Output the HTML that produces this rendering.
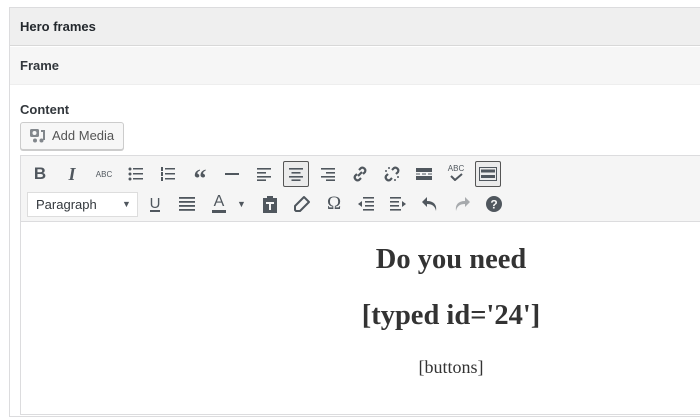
<!DOCTYPE html>
<html><head><style>
*{margin:0;padding:0;box-sizing:border-box}
body{width:700px;height:400px;overflow:hidden;background:#fff;font-family:"Liberation Sans",sans-serif;position:relative;color:#23282d}
.a{position:absolute}
.ic{position:absolute;width:24px;height:24px;display:flex;align-items:center;justify-content:center;color:#50575e}
.ic svg{display:block}
</style></head><body>
<div class="a" style="left:9px;top:7px;width:700px;height:410px;border:1px solid #dcdcde;border-right:none;background:#fff"></div>
<div class="a" style="left:10px;top:8px;width:690px;height:38px;background:#efefef;border-bottom:1px solid #d8d8d8"></div>
<div class="a" style="left:20px;top:19px;font-size:13px;font-weight:bold">Hero frames</div>
<div class="a" style="left:10px;top:47px;width:690px;height:38px;background:#f6f6f6;border-bottom:1px solid #eee"></div>
<div class="a" style="left:20px;top:58px;font-size:13px;font-weight:bold;color:#32373c">Frame</div>
<div class="a" style="left:20px;top:102px;font-size:13px;font-weight:bold;color:#32373c">Content</div>
<div class="a" style="left:20px;top:122px;width:104px;height:28px;border:1px solid #ccc;border-radius:3px;background:#f7f7f7;box-shadow:0 1px 0 #ccc"></div>
<svg class="a" style="left:29px;top:128px" width="18" height="16" viewBox="0 0 18 16"><rect x="1" y="1" width="9" height="8" rx="1.5" fill="#82878c"/><circle cx="5.5" cy="5" r="2" fill="#f7f7f7"/><path d="M12 3h3v9" stroke="#82878c" stroke-width="2" fill="none"/><circle cx="12.5" cy="12.5" r="2" fill="#82878c"/><circle cx="6" cy="12.5" r="2" fill="#82878c"/></svg>
<div class="a" style="left:52px;top:128px;font-size:13px;color:#555">Add Media</div>
<div class="a" style="left:20px;top:155px;width:690px;height:260px;border:1px solid #dcdcde;border-right:none"></div>
<div class="a" style="left:21px;top:156px;width:690px;height:66px;background:#f5f5f5;border-bottom:1px solid #dcdcde"></div>
<!-- row1 -->
<div class="ic" style="left:28px;top:162px;font-weight:bold;font-size:17px">B</div>
<div class="ic" style="left:60px;top:162px;font-style:italic;font-size:18px;font-family:'Liberation Serif',serif;font-weight:bold">I</div>
<div class="ic" style="left:92px;top:162px;font-size:8px">ABC</div>
<div class="ic" style="left:124px;top:162px"><svg width="16" height="14"><g fill="#50575e"><circle cx="2" cy="2" r="1.5"/><circle cx="2" cy="7" r="1.5"/><circle cx="2" cy="12" r="1.5"/><rect x="5" y="1" width="10" height="1.5"/><rect x="5" y="6" width="10" height="1.5"/><rect x="5" y="11" width="10" height="1.5"/></g></svg></div>
<div class="ic" style="left:156px;top:162px"><svg width="16" height="14"><g fill="#50575e"><rect x="1" y="0" width="2" height="4"/><rect x="1" y="5" width="2" height="4"/><rect x="1" y="10" width="2" height="4"/><rect x="5" y="1" width="10" height="1.5"/><rect x="5" y="6" width="10" height="1.5"/><rect x="5" y="11" width="10" height="1.5"/></g></svg></div>
<div class="ic" style="left:188px;top:162px;font-weight:bold;font-size:26px;font-family:'Liberation Serif',serif;padding-top:10px">“</div>
<div class="ic" style="left:220px;top:162px"><svg width="14" height="3"><rect width="14" height="2" fill="#50575e"/></svg></div>
<div class="ic" style="left:252px;top:162px"><svg width="14" height="13"><g fill="#50575e"><rect y="0" width="14" height="1.6"/><rect y="4" width="9" height="1.6"/><rect y="8" width="14" height="1.6"/><rect y="11.4" width="9" height="1.6"/></g></svg></div>
<div class="ic" style="left:283px;top:161px;width:26px;height:26px;border:1px solid #555;border-radius:2px;background:#ebebeb"><svg width="14" height="13"><g fill="#50575e"><rect y="0" width="14" height="1.6"/><rect x="2.5" y="4" width="9" height="1.6"/><rect y="8" width="14" height="1.6"/><rect x="2.5" y="11.4" width="9" height="1.6"/></g></svg></div>
<div class="ic" style="left:316px;top:162px"><svg width="14" height="13"><g fill="#50575e"><rect y="0" width="14" height="1.6"/><rect x="5" y="4" width="9" height="1.6"/><rect y="8" width="14" height="1.6"/><rect x="5" y="11.4" width="9" height="1.6"/></g></svg></div>
<div class="ic" style="left:348px;top:162px"><svg width="18" height="18"><g stroke="#50575e" stroke-width="2.2" fill="none"><path d="M8 5l2-2a3 3 0 014 4l-2 2"/><path d="M10 13l-2 2a3 3 0 01-4-4l2-2"/><path d="M7 11l4-4"/></g></svg></div>
<div class="ic" style="left:380px;top:162px"><svg width="18" height="18"><g stroke="#50575e" stroke-width="2.2" fill="none"><path d="M9 5l2-2a3 3 0 014 4l-2 2"/><path d="M9 13l-2 2a3 3 0 01-4-4l2-2"/><path d="M2 6h2M6 2v2M16 12h-2M12 16v-2" stroke-width="1.5"/></g></svg></div>
<div class="ic" style="left:412px;top:162px"><svg width="16" height="12"><g fill="#50575e"><rect width="16" height="4"/><rect y="5.5" width="4" height="1"/><rect x="6" y="5.5" width="4" height="1"/><rect x="12" y="5.5" width="4" height="1"/><rect y="8" width="16" height="4"/></g></svg></div>
<div class="ic" style="left:444px;top:160px;flex-direction:column;font-size:8px;line-height:9px">ABC<svg width="14" height="8"><path d="M2 3l4 4 7-6" stroke="#50575e" stroke-width="2" fill="none"/></svg></div>
<div class="ic" style="left:475px;top:161px;width:26px;height:26px;border:1px solid #555;border-radius:2px;background:#ebebeb"><svg width="18" height="14"><rect x=".5" y=".5" width="17" height="13" fill="none" stroke="#50575e"/><g fill="#50575e"><rect x="2" y="2.5" width="14" height="3"/><rect x="2" y="8" width="14" height="3"/></g></svg></div>
<!-- row2 -->
<div class="a" style="left:27px;top:192px;width:111px;height:25px;background:#fff;border:1px solid #ddd"></div>
<div class="a" style="left:36px;top:197px;font-size:13px;color:#32373c">Paragraph</div>
<div class="a" style="left:122px;top:197px;font-size:9px;color:#50575e;padding-top:2px">▼</div>
<div class="ic" style="left:143px;top:192px;font-size:15px"><span style="border-bottom:2px solid #50575e;line-height:13px">U</span></div>
<div class="ic" style="left:175px;top:192px"><svg width="16" height="14"><g fill="#50575e"><rect y="0" width="16" height="1.8"/><rect y="4" width="16" height="1.8"/><rect y="8" width="16" height="1.8"/><rect y="12" width="16" height="1.8"/></g></svg></div>
<div class="ic" style="left:207px;top:191px;font-size:16px"><span style="border-bottom:3px solid #50575e;line-height:16px;padding:0 2px">A</span></div>
<div class="a" style="left:237px;top:199px;font-size:9px;color:#50575e">▼</div>
<div class="ic" style="left:258px;top:192px"><svg width="16" height="18"><path d="M1 3h4V1h6v2h4v15H1z" fill="#50575e"/><rect x="4" y="7" width="8" height="2" fill="#f5f5f5"/><rect x="7" y="7" width="2" height="8" fill="#f5f5f5"/></svg></div>
<div class="ic" style="left:290px;top:192px"><svg width="18" height="18"><path d="M11 2l5 5-9 9H3l-1-1v-4z" fill="none" stroke="#50575e" stroke-width="2" stroke-linejoin="round"/></svg></div>
<div class="ic" style="left:322px;top:192px;font-size:19px;font-family:'Liberation Serif',serif">Ω</div>
<div class="ic" style="left:354px;top:192px"><svg width="16" height="14"><g fill="#50575e"><rect x="5" y="0" width="11" height="1.6"/><rect x="7" y="4" width="9" height="1.6"/><rect x="7" y="8" width="9" height="1.6"/><rect x="5" y="12" width="11" height="1.6"/><path d="M0 7l4-3v6z"/></g></svg></div>
<div class="ic" style="left:386px;top:192px"><svg width="16" height="14"><g fill="#50575e"><rect x="0" y="0" width="11" height="1.6"/><rect x="0" y="4" width="9" height="1.6"/><rect x="0" y="8" width="9" height="1.6"/><rect x="0" y="12" width="11" height="1.6"/><path d="M16 7l-4-3v6z"/></g></svg></div>
<div class="ic" style="left:418px;top:192px"><svg width="18" height="18"><path d="M6 2L1 7l5 5V9c5 0 8 2 9 7 1-6-2-10-9-10z" fill="#50575e"/></svg></div>
<div class="ic" style="left:450px;top:192px"><svg width="18" height="18"><path d="M12 2l5 5-5 5V9c-5 0-8 2-9 7-1-6 2-10 9-10z" fill="#a7aaad"/></svg></div>
<div class="ic" style="left:482px;top:192px"><svg width="16" height="16"><circle cx="8" cy="8" r="8" fill="#50575e"/><text x="8" y="12.5" text-anchor="middle" font-size="12" font-weight="bold" fill="#f5f5f5" font-family="Liberation Sans">?</text></svg></div>
<!-- content -->
<div class="a" style="left:251px;width:400px;text-align:center;top:244px;font-family:'Liberation Serif',serif;font-weight:bold;font-size:28.5px;color:#333">Do you need</div>
<div class="a" style="left:251px;width:400px;text-align:center;top:300px;font-family:'Liberation Serif',serif;font-weight:bold;font-size:28.5px;color:#333">[typed id='24']</div>
<div class="a" style="left:251px;width:400px;text-align:center;top:357px;font-family:'Liberation Serif',serif;font-size:18px;color:#333">[buttons]</div>
</body></html>
